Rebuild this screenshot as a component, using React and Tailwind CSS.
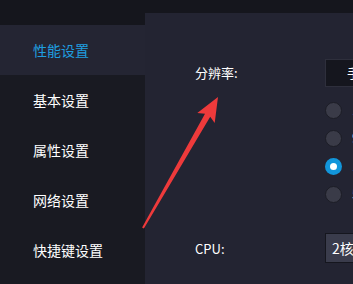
import React from 'react'

const menu = ['性能设置', '基本设置', '属性设置', '网络设置', '快捷键设置']
const sizes = ['1600×900', '960×540', '1280×720', '540×960']

export default function App() {
  const font = { fontFamily: '"Noto Sans CJK SC", "Noto Sans", sans-serif' }
  return (
    <div className="relative w-[353px] h-[284px] overflow-hidden bg-[#15161d] flex" style={font}>
      <div className="w-[145px] shrink-0 pt-[25px] bg-[#15161d] flex flex-col">
        <div className="flex-1 bg-[#191a22] flex flex-col">
          {menu.map((m, i) => (
            <div
              key={m}
              className={`h-[50px] flex items-center pl-[33px] text-[14px] ${i === 0 ? 'bg-[#242533] text-[#1f9fe0]' : 'text-white'}`}
            >
              {m}
            </div>
          ))}
        </div>
      </div>

      <div className="flex-1 mt-[13px] bg-[#232432] pt-[46px] pl-[50px] text-white text-[13px]">
        <div className="flex items-start">
          <div className="w-[130px] h-[28px] leading-[28px]">分辨率:</div>
          <div className="flex flex-col">
            <div className="w-[120px] h-[28px] bg-[#15161e] border border-[#2e2f3c] pl-[21px] leading-[26px] text-[13px] whitespace-nowrap">手机版</div>
            <div className="mt-[15px] flex flex-col gap-[12px]">
              {sizes.map((s, i) => (
                <div key={s} className="flex items-center h-[16px] whitespace-nowrap">
                  {i === 2 ? (
                    <div className="w-[17px] h-[17px] rounded-full bg-[#1296db] flex items-center justify-center">
                      <div className="w-[7px] h-[7px] rounded-full bg-white" />
                    </div>
                  ) : (
                    <div className="w-[17px] h-[17px] rounded-full bg-[#3a3b48] border border-[#1c1d26]" />
                  )}
                  <span className="ml-[10px] text-[13px] text-[#c8c9d0]">{s}</span>
                </div>
              ))}
            </div>
          </div>
        </div>

        <div className="flex items-center mt-[31px]">
          <div className="w-[130px] h-[29px] leading-[29px]">CPU:</div>
          <div className="w-[120px] h-[30px] bg-[#3a3c4c] border border-[#15161e] pl-[6px] leading-[28px] text-[14px] whitespace-nowrap">2核</div>
        </div>
      </div>

      <svg className="absolute inset-0 pointer-events-none" width="353" height="284" viewBox="0 0 353 284">
        <polygon
          points="218,97 214.7,123 210.2,116.7 143.9,228.5 142.1,227.5 205,113.7 197.3,113"
          fill="#ee3a3b"
        />
      </svg>
    </div>
  )
}
